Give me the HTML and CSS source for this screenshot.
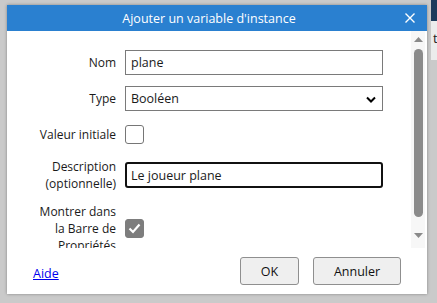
FILE: index.html
```html
<!DOCTYPE html>
<html lang="fr">
<head>
<meta charset="utf-8">
<link rel="stylesheet" href="styles.css">
</head>
<body>
<div class="desk">
  <div class="bg-app"><div class="bg-top"></div><div class="bg-text">t</div></div>
  <div class="dialog">
    <div class="titlebar">
      <span class="title">Ajouter un variable d'instance</span>
      <span class="close"><svg width="10" height="10" viewBox="0 0 10 10"><path d="M0.5 0.5L9.5 9.5M9.5 0.5L0.5 9.5" stroke="#fff" stroke-width="1.4" fill="none"/></svg></span>
    </div>
    <div class="body">
      <div class="scroll">
        <div class="form">
          <label class="lbl">Nom</label>
          <div class="field"><div class="input">plane</div></div>
          <label class="lbl">Type</label>
          <div class="field"><div class="input select">Booléen
            <svg class="chev" width="10" height="7" viewBox="0 0 10 7"><path d="M1 1.5L5 5.5L9 1.5" stroke="#000" stroke-width="2" fill="none"/></svg></div></div>
          <label class="lbl">Valeur initiale</label>
          <div class="field"><span class="cb"></span></div>
          <label class="lbl">Description (optionnelle)</label>
          <div class="field"><div class="input focus">Le joueur plane</div></div>
          <label class="lbl">Montrer dans la Barre de Propriétés</label>
          <div class="field"><span class="cb checked"><svg width="13" height="11" viewBox="0 0 13 11"><path d="M1.5 5.5L5 9L11.5 1.5" stroke="#fff" stroke-width="2.2" fill="none"/></svg></span></div>
        </div>
      </div>
      <div class="vscroll">
        <svg class="arr" width="9" height="5" viewBox="0 0 9 5"><path d="M0 5L4.5 0L9 5Z" fill="#8a8a8a"/></svg>
        <div class="thumb"></div>
        <svg class="arr" width="9" height="5" viewBox="0 0 9 5"><path d="M0 0L4.5 5L9 0Z" fill="#8a8a8a"/></svg>
      </div>
    </div>
    <div class="footer">
      <a class="help" href="#">Aide</a>
      <div class="btns">
        <button class="btn ok">OK</button>
        <button class="btn cancel">Annuler</button>
      </div>
    </div>
  </div>
</div>
</body>
</html>
```
FILE: styles.css
```css
html, body { margin: 0; padding: 0; }
body {
  width: 437px; height: 303px; overflow: hidden;
  background: #cacaca;
  font-family: "Open Sans", "Noto Sans", sans-serif;
  font-size: 12px;
  color: #1a1a1a;
}
.desk { position: relative; width: 437px; height: 303px; }
.bg-app { position: absolute; left: 431px; top: 0; width: 6px; height: 60px; background: #ececec; }
.bg-top { height: 21px; background: #1d3b5c; }
.bg-text { font-size: 13px; color: #222; line-height: 14px; margin-top: 10px; margin-left: 2px; }
.dialog {
  position: absolute; left: 7px; top: 5px; width: 420px; height: 289px;
  background: #fff;
  box-shadow: 0 0 3px rgba(0,0,0,0.35);
  display: flex; flex-direction: column;
}
.titlebar {
  height: 26px; background: #2a80d0; color: #fff;
  display: flex; align-items: center;
  flex: none;
}
.title { font-size: 12.5px; flex: 1; text-align: center; padding-left: 12px; }
.close { width: 28px; flex: none; display: flex; align-items: center; justify-content: flex-start; padding-left: 6px; box-sizing: border-box; }
.body { display: flex; height: 217px; flex: none; }
.scroll { flex: 1; overflow: hidden; }
.form {
  display: grid; grid-template-columns: 80px 258px;
  column-gap: 9px; row-gap: 11px;
  padding: 19px 0 0 29px;
  align-items: center;
}
.lbl { text-align: right; line-height: 17px; }
.field { display: flex; align-items: center; min-height: 25px; }
.input {
  box-sizing: border-box; width: 258px; height: 25px;
  border: 1px solid #7a7a7a; padding: 0 5px;
  display: flex; align-items: center; position: relative;
  font-size: 12.5px;
}
.select .chev { position: absolute; right: 6px; top: 9px; }
.input.focus { border: 2px solid #111; border-radius: 3px; padding: 0 4px; height: 26px; }
.cb {
  box-sizing: border-box; width: 19px; height: 19px;
  border: 1px solid #767676; border-radius: 3px; background: #fff;
  display: flex; align-items: center; justify-content: center;
}
.cb.checked { background: #7d7d7d; border-color: #7d7d7d; }
.vscroll {
  width: 14px; margin-right: 2px; background: #f7f7f7;
  display: flex; flex-direction: column; align-items: center;
  padding-top: 6px;
}
.arr { flex: none; }
.thumb { width: 9px; height: 168px; background: #8b8b8b; border-radius: 5px; margin: 7px 0 16px; }
.footer {
  flex: 1; display: flex; align-items: center; justify-content: space-between;
  padding: 0 26px 0 26px;
}
.help { color: #0000ee; text-decoration: underline; font-size: 12.5px; margin-top: 4px; }
.btns { display: flex; gap: 14px; }
.btn {
  font-family: inherit; font-size: 12.5px; color: #111;
  height: 28px; background: #efefef; border: 1px solid #8f8f8f; border-radius: 3px;
  padding: 0;
}
.ok { width: 59px; }
.cancel { width: 88px; }
```
